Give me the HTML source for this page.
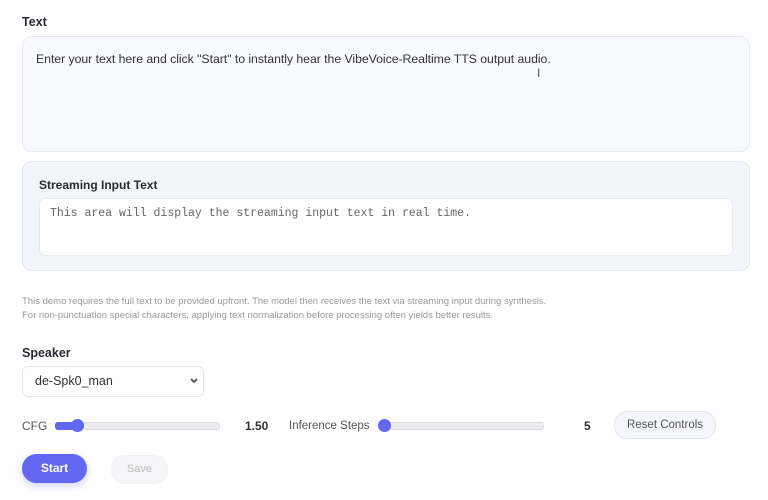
<!DOCTYPE html>
<html><head><style>
body{margin:0;width:768px;height:500px;background:#fff;font-family:"Liberation Sans",sans-serif;color:#222;position:relative;overflow:hidden}
.a{position:absolute}
.lbl{font-size:12.5px;font-weight:bold;color:#2a2a33}
</style></head><body>
<div class="a lbl" style="left:22px;top:15px">Text</div>
<div class="a" style="left:22px;top:36px;width:726px;height:114px;border:1px solid #e6e8f0;border-radius:10px;background:#f9fafd"></div>
<div class="a" style="left:36px;top:52px;font-size:12.3px;letter-spacing:-0.05px;color:#333">Enter your text here and click "Start" to instantly hear the VibeVoice-Realtime TTS output audio.</div>
<div class="a" style="left:537px;top:66px;font-size:12px;color:#555">I</div>
<div class="a" style="left:22px;top:161px;width:726px;height:108px;border:1px solid #e3e6f1;border-radius:10px;background:#f3f5fc"></div>
<div class="a lbl" style="left:39px;top:178px;font-size:12px">Streaming Input Text</div>
<div class="a" style="left:39px;top:198px;width:692px;height:56px;border:1px solid #e8eaf2;border-radius:6px;background:#fff"></div>
<div class="a" style="left:50px;top:207px;font-family:'Liberation Mono',monospace;font-size:11.5px;color:#666">This area will display the streaming input text in real time.</div>
<div class="a" style="left:22px;top:295px;font-size:9.5px;color:#999;line-height:14px">This demo requires the full text to be provided upfront. The model then receives the text via streaming input during synthesis.<br>For non-punctuation special characters, applying text normalization before processing often yields better results.</div>
<div class="a lbl" style="left:22px;top:346px">Speaker</div>
<div class="a" style="left:22px;top:366px;width:180px;height:29px;border:1px solid #e6e8ee;border-radius:6px;background:#fff"></div>
<div class="a" style="left:35px;top:374px;font-size:12.5px;color:#333">de-Spk0_man</div>
<svg class="a" style="left:190px;top:378px" width="8" height="6"><path d="M1 1L4 4L7 1" stroke="#444" stroke-width="1.6" fill="none"/></svg>
<div class="a" style="left:22px;top:419px;font-size:12px;color:#555">CFG</div>
<div class="a" style="left:55px;top:422px;width:163px;height:6px;border-radius:3px;background:#ececf0;border:1px solid #ddd"></div>
<div class="a" style="left:55px;top:422px;width:22px;height:8px;border-radius:3px;background:#6366f1"></div>
<div class="a" style="left:71px;top:419px;width:13px;height:13px;border-radius:50%;background:#6366f1"></div>
<div class="a" style="left:245px;top:419px;font-size:12px;font-weight:bold;color:#333">1.50</div>
<div class="a" style="left:289px;top:420px;font-size:11.5px;color:#555">Inference Steps</div>
<div class="a" style="left:379px;top:422px;width:163px;height:6px;border-radius:3px;background:#ececf0;border:1px solid #ddd"></div>
<div class="a" style="left:378px;top:419px;width:13px;height:13px;border-radius:50%;background:#6366f1"></div>
<div class="a" style="left:584px;top:419px;font-size:12px;font-weight:bold;color:#333">5</div>
<div class="a" style="left:614px;top:411px;width:100px;height:26px;border:1px solid #e3e5ee;border-radius:13px;background:#f5f6fb;font-size:11.5px;color:#555;text-align:center;line-height:26px">Reset Controls</div>
<div class="a" style="left:22px;top:454px;width:65px;height:29px;border-radius:15px;background:#6366f1;color:#fff;font-size:12px;font-weight:bold;text-align:center;line-height:29px;box-shadow:0 3px 8px rgba(99,102,241,.3)">Start</div>
<div class="a" style="left:111px;top:455px;width:55px;height:27px;border-radius:14px;background:#f6f6f8;border:1px solid #f0f0f3;color:#bbb;font-size:11px;text-align:center;line-height:27px">Save</div>
</body></html>
